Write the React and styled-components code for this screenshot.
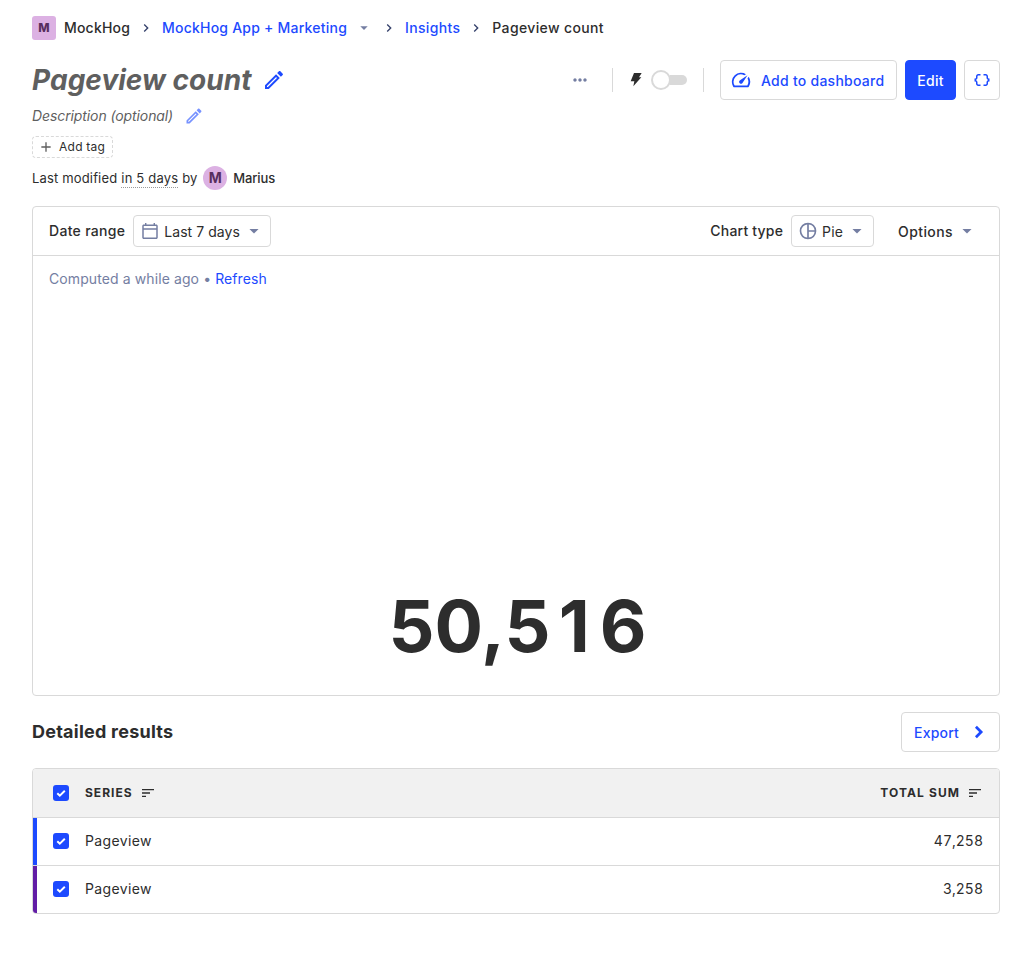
import React from "react";
import styled, { createGlobalStyle } from "styled-components";

const c = {
  text: "#2d2d2d",
  primary: "#1d4aff",
  border: "#d9d9d9",
  muted: "#747ea2",
  alt: "#35416b",
};

const GlobalStyle = createGlobalStyle`
  *, *::before, *::after { box-sizing: border-box; }
  body {
    margin: 0;
    background: #fff;
    color: ${c.text};
    font-family: Inter, "Liberation Sans", sans-serif;
    font-size: 14px;
    line-height: 20px;
  }
  button { font: inherit; color: inherit; margin: 0; }
`;

const Page = styled.main`
  display: flex;
  flex-direction: column;
  width: 1032px;
  padding: 16px 32px 64px;
  white-space: nowrap;
`;

const Svg = styled.svg`
  flex: none;
  display: block;
  width: ${(p) => p.$size || 24}px;
  height: ${(p) => p.$size || 24}px;
  color: ${(p) => p.$color || "inherit"};
  opacity: ${(p) => p.$opacity || 1};
  margin: ${(p) => p.$margin || 0};
`;

const PATHS = {
  chevron: "M10 6L8.59 7.41 13.17 12l-4.58 4.59L10 18l6-6z",
  chevronBold: "M9.700 5.300L7.600 7.400 12.200 12l-4.600 4.600 2.100 2.100L16.400 12z",
  caret: "M6.500 9.500l5.500 5.500 5.500-5.500z",
  edit: "M14.06 9.02l.92.92L5.92 19H5v-.92l9.06-9.06M17.66 3c-.25 0-.51.1-.7.29l-1.83 1.83 3.75 3.75 1.83-1.83c.39-.39.39-1.02 0-1.41l-2.34-2.34c-.2-.2-.45-.29-.71-.29zm-3.6 3.19L3 17.25V21h3.75L17.81 9.94l-3.75-3.75z",
  plus: "M19 13h-6v6h-2v-6H5v-2h6V5h2v6h6v2z",
  gauge: "M20.38 8.57l-1.23 1.85a8 8 0 0 1-.22 7.58H5.07A8 8 0 0 1 15.58 6.85l1.85-1.23A10 10 0 0 0 3.35 19a2 2 0 0 0 1.72 1h13.85a2 2 0 0 0 1.74-1 10 10 0 0 0-.27-10.44zm-9.79 6.84a2 2 0 0 0 2.83 0l5.66-8.49-8.49 5.66a2 2 0 0 0 0 2.83z",
  dots: "M6 10c-1.1 0-2 .9-2 2s.9 2 2 2 2-.9 2-2-.9-2-2-2zm12 0c-1.1 0-2 .9-2 2s.9 2 2 2 2-.9 2-2-.9-2-2-2zm-6 0c-1.1 0-2 .9-2 2s.9 2 2 2 2-.9 2-2-.9-2-2-2z",
  bolt: "M9 1.500H20.500L16.500 7.800H20L8 21.500L9.500 14H4z",
  braces: "M4 7v2c0 .55-.45 1-1 1H2v4h1c.55 0 1 .45 1 1v2c0 1.65 1.35 3 3 3h3v-2H7c-.55 0-1-.45-1-1v-2c0-1.3-.84-2.42-2-2.83v-.34C5.16 11.42 6 10.3 6 9V7c0-.55.45-1 1-1h3V4H7C5.35 4 4 5.35 4 7zm17 3c-.55 0-1-.45-1-1V7c0-1.65-1.35-3-3-3h-3v2h3c.55 0 1 .45 1 1v2c0 1.3.84 2.42 2 2.83v.34c-1.16.41-2 1.52-2 2.83v2c0 .55-.45 1-1 1h-3v2h3c1.65 0 3-1.35 3-3v-2c0-.55.45-1 1-1h1v-4h-1z",
  calendar: "M19.500 4.200H18V2.400h-1.700v1.800H7.700V2.400H6v1.800H4.500C3.500 4.200 2.700 5 2.700 6v13.700c0 1 .8 1.800 1.800 1.800h15c1 0 1.800-.8 1.800-1.800V6c0-1-.8-1.800-1.800-1.800zm0 15.500h-15V10.500h15zm0-11h-15V6h15z",
  pie: "M12 2a10 10 0 1 0 0 20 10 10 0 0 0 0-20zm1 2.070A8 8 0 0 1 19.930 11H13zM4 12a8 8 0 0 1 7-7.930v15.860A8 8 0 0 1 4 12zm9 7.930V13h6.930A8 8 0 0 1 13 19.930z",
  sort: "M3 18h6v-2H3v2zM3 6v2h18V6H3zm0 7h12v-2H3v2z",
};

const Icon = ({ name, size, color, opacity, margin }) => (
  <Svg viewBox="0 0 24 24" fill="currentColor" $size={size} $color={color} $opacity={opacity} $margin={margin}>
    <path d={PATHS[name]} />
  </Svg>
);

const Text = styled.span`
  letter-spacing: ${(p) => p.$track || 0}px;
`;

const Breadcrumbs = styled.nav`
  display: flex;
  align-items: center;
  height: 24px;
  font-weight: 500;
`;

const Crumb = styled(Text)`
  color: ${(p) => (p.$link ? c.primary : c.text)};
`;

const Lettermark = styled.span`
  display: flex;
  align-items: center;
  justify-content: center;
  width: 24px;
  height: 24px;
  margin-right: 8px;
  border-radius: 3px;
  background: #dcb1e3;
  color: #572e5e;
  font-size: 12px;
  font-weight: 800;
`;

const Avatar = styled(Lettermark)`
  margin: 0 6px;
  border-radius: 50%;
  font-size: 14px;
  font-weight: 700;
`;

const TitleRow = styled.header`
  display: flex;
  align-items: center;
  justify-content: space-between;
  height: 40px;
  margin-top: 20px;
`;

const TitleGroup = styled.div`
  display: flex;
  align-items: center;
`;

const Title = styled.h1`
  margin: 0;
  color: #5f5f5f;
  font-size: 28px;
  line-height: 40px;
  font-style: italic;
  font-weight: 700;
  letter-spacing: 0.03px;
`;

const Actions = styled.div`
  display: flex;
  align-items: center;
`;

const ButtonGroup = styled.div`
  display: flex;
  gap: 8px;
  margin-left: 16px;
`;

const Divider = styled.i`
  width: 1px;
  height: 24px;
  background: ${c.border};
`;

const Switch = styled.span`
  display: flex;
  align-items: center;
  width: 36px;
  height: 20px;
  margin: 0 16px 0 7px;
`;

const Thumb = styled.i`
  flex: none;
  width: 20px;
  height: 20px;
  border: 2px solid ${c.border};
  border-radius: 50%;
  background: #fff;
`;

const Track = styled.i`
  flex: 1;
  height: 10px;
  margin-left: -1px;
  border-radius: 0 5px 5px 0;
  background: ${c.border};
`;

const Button = styled.button`
  display: flex;
  align-items: center;
  justify-content: ${(p) => p.$justify || "flex-start"};
  width: ${(p) => p.$w}px;
  height: ${(p) => p.$h || 40}px;
  padding: ${(p) => p.$pad || "1px 0 0"};
  border: 1px solid ${(p) => (p.$filled ? c.primary : c.border)};
  border-radius: 4px;
  background: ${(p) => (p.$filled ? c.primary : "#fff")};
  color: ${(p) => (p.$filled ? "#fff" : p.$plain ? c.text : c.primary)};
  font-weight: ${(p) => (p.$plain ? 400 : 500)};
`;

const Description = styled.div`
  display: flex;
  align-items: center;
  height: 24px;
  margin-top: 4px;
  color: #5f5f5f;
  font-style: italic;
`;

const AddTag = styled.button`
  display: flex;
  align-items: center;
  width: 81px;
  height: 22px;
  margin-top: 8px;
  padding: 0 5px;
  border: 1px dashed ${c.border};
  border-radius: 4px;
  background: #fff;
  font-size: 12px;
`;

const Modified = styled.div`
  display: flex;
  align-items: center;
  height: 24px;
  margin-top: 8px;
  font-size: 13px;
`;

const When = styled(Text)`
  margin: 1px 4px 0;
  line-height: 17px;
  border-bottom: 1px dotted #999;
`;

const Strong = styled(Text)`
  font-weight: 500;
`;

const Card = styled.section`
  display: flex;
  flex-direction: column;
  height: 490px;
  margin-top: 16px;
  border: 1px solid ${c.border};
  border-radius: 4px;
`;

const Filters = styled.div`
  display: flex;
  align-items: center;
  justify-content: space-between;
  height: 49px;
  padding: 0 16px;
  border-bottom: 1px solid ${c.border};
`;

const FilterGroup = styled.div`
  display: flex;
  align-items: center;
  gap: 8px;
  font-weight: 500;
`;

const Options = styled.span`
  display: flex;
  align-items: center;
  padding: 2px 6px 0 16px;
`;

const Computed = styled.div`
  padding: 13px 16px 0;
  color: ${c.muted};
  letter-spacing: 0.1px;
`;

const Link = styled.span`
  color: ${c.primary};
`;

const Total = styled.div`
  margin-top: auto;
  padding-left: 3px;
  padding-bottom: 21px;
  text-align: center;
  font-size: 72px;
  line-height: 96px;
  font-weight: 700;
`;

const NarrowDigit = styled.span`
  margin: 0 10px 0 8px;
`;

const ResultsHeader = styled.div`
  display: flex;
  align-items: center;
  justify-content: space-between;
  margin: 16px 0;
`;

const Heading = styled.h2`
  margin: 0;
  font-size: 18px;
  line-height: 24px;
  font-weight: 700;
  letter-spacing: 0.24px;
`;

const Table = styled.div`
  border: 1px solid ${c.border};
  border-radius: 4px;
  overflow: hidden;
`;

const Row = styled.div`
  display: flex;
  border-top: 1px solid ${c.border};
  height: 48px;
`;

const Ribbon = styled.i`
  width: 4px;
  background: ${(p) => p.$color};
`;

const Cells = styled.div`
  display: flex;
  flex: 1;
  align-items: center;
  padding: 0 16px 1px;
`;

const Head = styled(Cells)`
  height: 48px;
  padding: 0 16px 0 20px;
  background: #f1f1f1;
  font-size: 12px;
  font-weight: 700;
`;

const Value = styled(Text)`
  margin-left: auto;
  font-variant-numeric: tabular-nums;
`;

const Checkbox = styled.span`
  display: flex;
  width: 16px;
  height: 16px;
  margin-right: 16px;
  border-radius: 3px;
  background: ${c.primary};
`;

const Checked = () => (
  <Checkbox>
    <svg width="16" height="16" viewBox="0 0 16 16" fill="none" stroke="#fff" strokeWidth="2">
      <path d="M4.300 8.200l2.500 2.400L11.800 5.700" />
    </svg>
  </Checkbox>
);

const SERIES = [
  { name: "Pageview", total: "47,258", color: "#1d4aff" },
  { name: "Pageview", total: "3,258", color: "#621da6" },
];

export default function App() {
  return (
    <Page>
      <GlobalStyle />
      <Breadcrumbs>
        <Lettermark>M</Lettermark>
        <Crumb $track={0.19}>MockHog</Crumb>
        <Icon name="chevron" size={16} color={c.alt} margin="0 8px" />
        <Crumb $link $track={0.22}>MockHog App + Marketing</Crumb>
        <Icon name="caret" size={16} color={c.muted} margin="0 9px 0 9px" />
        <Icon name="chevron" size={16} color={c.alt} margin="0 8px 0 0" />
        <Crumb $link $track={0.33}>Insights</Crumb>
        <Icon name="chevron" size={16} color={c.alt} margin="0 8px" />
        <Crumb $track={0.36}>Pageview count</Crumb>
      </Breadcrumbs>

      <TitleRow>
        <TitleGroup>
          <Title>Pageview count</Title>
          <Icon name="edit" color={c.primary} margin="0 0 0 11px" />
        </TitleGroup>
        <Actions>
          <Icon name="dots" size={20} color={c.muted} margin="0 22px 0 0" />
          <Divider />
          <Icon name="bolt" size={16} margin="0 0 0 15px" />
          <Switch>
            <Thumb />
            <Track />
          </Switch>
          <Divider />
          <ButtonGroup>
            <Button $w={177} $pad="1px 0 0 9px">
              <Icon name="gauge" size={22} margin="-2px 9px 0 0" />
              <Text $track={0.26}>Add to dashboard</Text>
            </Button>
            <Button $w={51} $filled $justify="center">
              <Text $track={0.3}>Edit</Text>
            </Button>
            <Button $w={36} $justify="center" $pad="0">
              <Icon name="braces" size={18} />
            </Button>
          </ButtonGroup>
        </Actions>
      </TitleRow>

      <Description>
        <Text $track={-0.1}>Description (optional)</Text>
        <Icon name="edit" size={20} color={c.primary} opacity={0.6} margin="0 0 0 11px" />
      </Description>

      <AddTag>
        <Icon name="plus" size={16} color="#5f5f5f" margin="0 5px 0 0" />
        <Text $track={0.25}>Add tag</Text>
      </AddTag>

      <Modified>
        <Text $track={0.16}>Last modified</Text>
        <When $track={0.18}>in 5 days</When>
        by
        <Avatar>M</Avatar>
        <Strong $track={-0.1}>Marius</Strong>
      </Modified>

      <Card>
        <Filters>
          <FilterGroup>
            <Text $track={0.3}>Date range</Text>
            <Button $plain $w={138} $h={32} $pad="1px 0 0 6px">
              <Icon name="calendar" size={20} color={c.muted} margin="-1px 4px 0 0" />
              <Text $track={0.06}>Last 7 days</Text>
              <Icon name="caret" size={20} color={c.muted} margin="-2px 0 0 4px" />
            </Button>
          </FilterGroup>
          <FilterGroup>
            <Text $track={0.2}>Chart type</Text>
            <Button $plain $w={83} $h={32} $pad="1px 0 0 6px">
              <Icon name="pie" size={20} color={c.muted} margin="-1px 4px 0 0" />
              <Text $track={0.2}>Pie</Text>
              <Icon name="caret" size={20} color={c.muted} margin="-2px 0 0 4px" />
            </Button>
            <Options>
              <Text $track={0.4}>Options</Text>
              <Icon name="caret" size={20} color={c.muted} margin="-2px 0 0 4px" />
            </Options>
          </FilterGroup>
        </Filters>
        <Computed>
          Computed a while ago • <Link>Refresh</Link>
        </Computed>
        <Total>
          50,5<NarrowDigit>1</NarrowDigit>6
        </Total>
      </Card>

      <ResultsHeader>
        <Heading>Detailed results</Heading>
        <Button $w={99} $pad="1px 0 0 12px">
          <Text $track={0.2}>Export</Text>
          <Icon name="chevronBold" size={22} margin="-2px 0 0 9px" />
        </Button>
      </ResultsHeader>

      <Table>
        <Head>
          <Checked />
          <Text $track={1}>SERIES</Text>
          <Icon name="sort" size={16} margin="0 0 0 7px" />
          <Value $track={1.05}>TOTAL SUM</Value>
          <Icon name="sort" size={16} margin="0 0 0 7px" />
        </Head>
        {SERIES.map((s) => (
          <Row key={s.total}>
            <Ribbon $color={s.color} />
            <Cells>
              <Checked />
              <Text $track={0.36}>{s.name}</Text>
              <Value>{s.total}</Value>
            </Cells>
          </Row>
        ))}
      </Table>
    </Page>
  );
}
